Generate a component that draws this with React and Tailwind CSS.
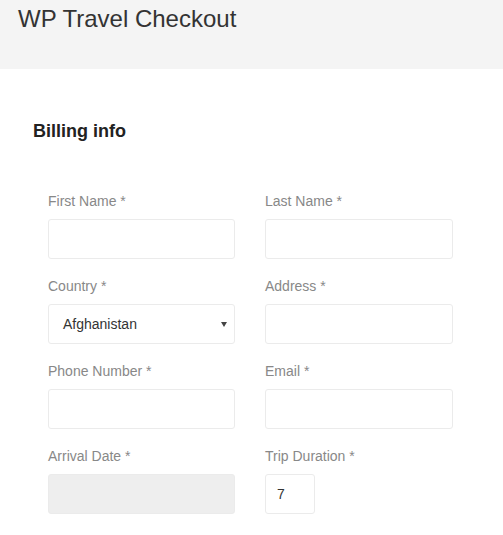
function Field({ label, children }) {
  return (
    <div className="flex flex-col">
      <label className="mb-[8px] text-[14px] leading-[20px] text-[#888]">{label}</label>
      {children}
    </div>
  );
}

function TextBox({ className = "" }) {
  return (
    <div className={`h-[40px] rounded-[3px] border border-[#ebebeb] bg-white ${className}`} />
  );
}

export default function App() {
  return (
    <div className="min-h-[535px] bg-white font-['Liberation_Sans',Arial,sans-serif] text-[#333]">
      <header className="h-[69px] bg-[#f4f4f4] pl-[18px] pt-[5px]">
        <h1 className="text-[24px] leading-[28px] font-normal text-[#333]">WP Travel Checkout</h1>
      </header>

      <div className="pl-[33px] pt-[52px]">
        <h2 className="text-[18px] leading-[20px] font-bold text-[#222]">Billing info</h2>
      </div>

      <div className="mt-[50px] grid grid-cols-[187px_188px] gap-x-[30px] gap-y-[17px] pl-[48px]">
        <Field label="First Name *">
          <TextBox />
        </Field>
        <Field label="Last Name *">
          <TextBox />
        </Field>

        <Field label="Country *">
          <div className="flex h-[40px] items-center justify-between rounded-[3px] border border-[#ebebeb] bg-white pl-[14px] pr-[7px]">
            <span className="text-[14px] text-[#333]">Afghanistan</span>
            <svg width="6" height="6" viewBox="0 0 6 6">
              <path d="M0 1h6L3 6z" fill="#444" />
            </svg>
          </div>
        </Field>
        <Field label="Address *">
          <TextBox />
        </Field>

        <Field label="Phone Number *">
          <TextBox />
        </Field>
        <Field label="Email *">
          <TextBox />
        </Field>

        <Field label="Arrival Date *">
          <TextBox className="!bg-[#eeeeee]" />
        </Field>
        <Field label="Trip Duration *">
          <div className="flex h-[40px] w-[50px] items-center rounded-[3px] border border-[#ebebeb] bg-white pl-[11px]">
            <span className="text-[14px] text-[#333]">7</span>
          </div>
        </Field>
      </div>
    </div>
  );
}
